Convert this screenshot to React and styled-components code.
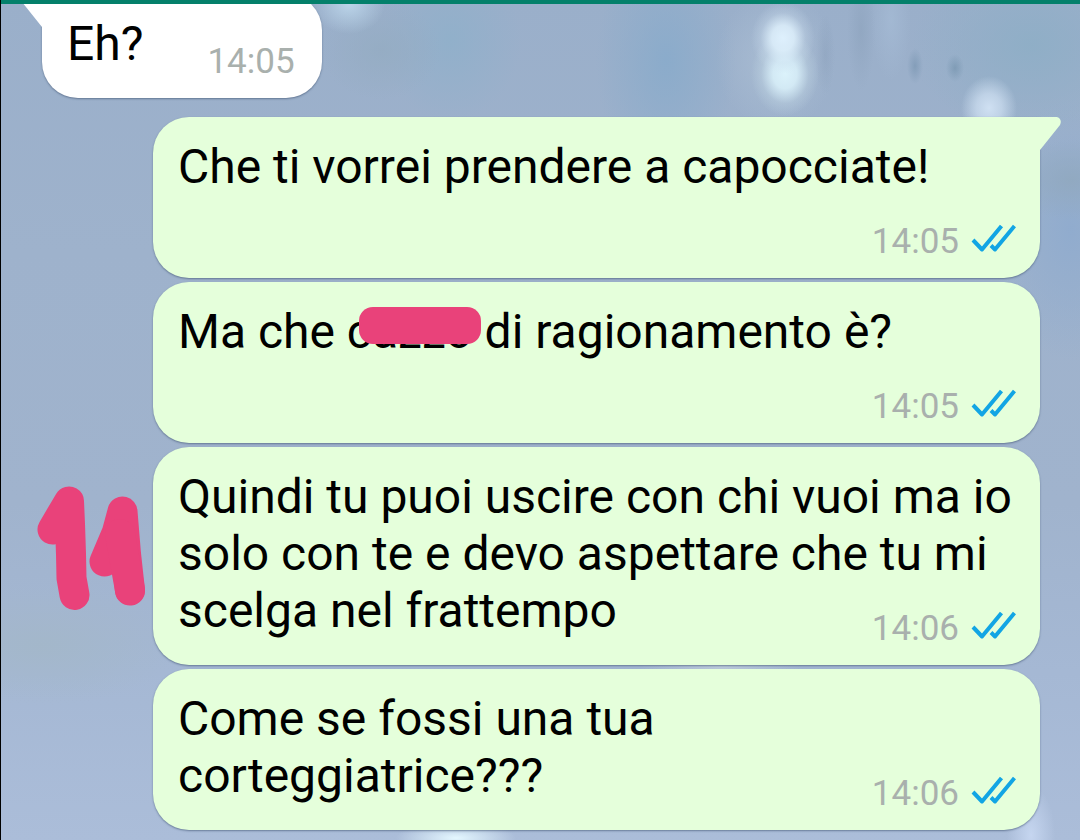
import styled, { createGlobalStyle, css } from "styled-components";

const GlobalStyle = createGlobalStyle`
  * {
    box-sizing: border-box;
  }

  body {
    margin: 0;
    font-family: Roboto, sans-serif;
    color: #000;
  }
`;

const Page = styled.div`
  min-height: 100vh;
  display: flex;
  flex-direction: column;
  border-left: 1px solid #000;
  background: radial-gradient(
      ellipse 32px 36px at 782px 38px,
      #def0fd 0%,
      rgba(222, 240, 252, 0.85) 35%,
      rgba(205, 223, 240, 0.3) 70%,
      transparent 100%
    ),
    radial-gradient(
      ellipse 34px 42px at 784px 74px,
      #dbf2fb 0%,
      rgba(219, 242, 251, 0.85) 35%,
      rgba(200, 222, 234, 0.3) 70%,
      transparent 100%
    ),
    radial-gradient(
      ellipse 60px 70px at 775px 60px,
      rgba(175, 194, 214, 0.7),
      transparent
    ),
    radial-gradient(
      ellipse 28px 32px at 988px 108px,
      #cfe0f2 0%,
      rgba(207, 224, 242, 0.7) 45%,
      transparent 100%
    ),
    radial-gradient(
      ellipse 36px 30px at 348px 4px,
      rgba(190, 216, 236, 0.9),
      transparent
    ),
    radial-gradient(ellipse 60px 16px at 455px 838px, #e4f7ff, transparent),
    radial-gradient(
      ellipse 24px 50px at 1030px 835px,
      rgba(200, 216, 242, 0.9),
      transparent
    ),
    radial-gradient(
      ellipse 80px 14px at 720px 667px,
      rgba(200, 214, 224, 0.7),
      transparent
    ),
    radial-gradient(
      ellipse 8px 18px at 914px 66px,
      rgba(122, 150, 178, 0.7),
      transparent
    ),
    radial-gradient(
      ellipse 9px 14px at 954px 68px,
      rgba(118, 148, 174, 0.7),
      transparent
    ),
    radial-gradient(
      ellipse 10px 40px at 824px 55px,
      rgba(136, 158, 186, 0.6),
      transparent
    ),
    radial-gradient(
      ellipse 14px 60px at 860px 30px,
      rgba(140, 162, 188, 0.6),
      transparent
    ),
    radial-gradient(
      ellipse 20px 60px at 890px 20px,
      rgba(166, 188, 214, 0.7),
      transparent
    ),
    radial-gradient(
      ellipse 60px 50px at 380px 50px,
      rgba(148, 172, 194, 0.8),
      transparent
    ),
    radial-gradient(
      ellipse 70px 80px at 450px 40px,
      rgba(144, 176, 202, 0.9),
      transparent
    ),
    radial-gradient(
      ellipse 70px 120px at 665px 60px,
      rgba(137, 171, 203, 0.9),
      transparent
    ),
    radial-gradient(
      ellipse 120px 90px at 1030px 45px,
      rgba(142, 174, 198, 0.9),
      transparent
    ),
    radial-gradient(
      ellipse 60px 40px at 1070px 180px,
      rgba(144, 168, 190, 0.8),
      transparent
    ),
    radial-gradient(
      ellipse 80px 130px at 1070px 230px,
      rgba(143, 171, 206, 0.9),
      transparent
    ),
    radial-gradient(
      ellipse 140px 60px at 40px 645px,
      rgba(163, 183, 201, 0.9),
      transparent
    ),
    linear-gradient(
      180deg,
      #9aafca 0%,
      #9eb2cc 30%,
      #a0b3cd 60%,
      #a5b8d4 80%,
      #abbdd9 100%
    );
`;

const TopBar = styled.header`
  height: 4px;
  flex: none;
  background: #04806b;
`;

/* the list is scrolled, so its first bubble goes in under the bar */
const MessageList = styled.main`
  flex: 1;
  display: flex;
  flex-direction: column;
  gap: 4px;
  margin-top: -10px;
  padding: 0 40px 10px 41px;
  clip-path: inset(10px 0 0 0);
`;

const outgoing = css`
  margin-left: 111px;
  padding-right: 24px;
  background: #e5ffdb;
  color: #e5ffdb;
`;

const incoming = css`
  align-self: flex-start;
  margin-bottom: 15px;
  padding-right: 27px;
  background: #fff;
  color: #fff;
`;

const Bubble = styled.article`
  position: relative;
  padding: 21px 0 26px 25px;
  border-radius: 36px;
  box-shadow: 0 1px 2px rgba(60, 80, 110, 0.6);
  ${({ $own }) => ($own ? outgoing : incoming)}
  ${({ $own, $tail }) =>
    $tail &&
    ($own ? "border-top-right-radius: 0;" : "border-top-left-radius: 0;")}
`;

const Tail = styled.svg`
  position: absolute;
  top: 0;
  width: 22px;
  height: 34px;
  fill: currentColor;
  ${({ $own }) =>
    $own ? "left: calc(100% - 1px);" : "right: calc(100% - 1px); scale: -1 1;"}
`;

const Text = styled.div`
  display: flow-root;
  font-size: 48px;
  line-height: 57px;
  color: #000;
`;

/* floats to the end of the last line, or below it when there is no room */
const Meta = styled.span`
  float: right;
  display: flex;
  align-items: center;
  gap: 12px;
  margin: 26px 0 -11px 64px;
  font-size: 35px;
  line-height: 42px;
  color: #a9b0ad;
`;

const Ticks = styled.svg`
  width: 45px;
  height: 30px;
  margin-bottom: 6px;
  fill: none;
  stroke: #12a5e4;
  stroke-width: 4;
  stroke-linejoin: round;
`;

const Censored = styled.span`
  position: relative;

  &::after {
    content: "";
    position: absolute;
    top: 4px;
    left: 12px;
    right: -8px;
    height: 37px;
    border-radius: 14px;
    background: #e9427a;
  }
`;

const Scribble = styled.svg`
  position: absolute;
  top: 37px;
  right: calc(100% + 6px);
  width: 111px;
  height: 128px;
  fill: none;
  stroke: #e9427a;
  stroke-width: 30;
  stroke-linecap: round;
  stroke-linejoin: round;
`;

const messages = [
  { id: 1, text: "Eh?", time: "14:05", tail: true },
  {
    id: 2,
    own: true,
    tail: true,
    text: "Che ti vorrei prendere a capocciate!",
    time: "14:05",
  },
  {
    id: 3,
    own: true,
    text: (
      <>
        Ma che <Censored>cazzo</Censored> di ragionamento è?
      </>
    ),
    time: "14:05",
  },
  {
    id: 4,
    own: true,
    marked: true,
    text: "Quindi tu puoi uscire con chi vuoi ma io solo con te e devo aspettare che tu mi scelga nel frattempo",
    time: "14:06",
  },
  {
    id: 5,
    own: true,
    text: "Come se fossi una tua corteggiatrice???",
    time: "14:06",
  },
];

const Message = ({ message }) => {
  const { own, tail, marked, text, time } = message;

  return (
    <Bubble $own={own} $tail={tail}>
      {tail && (
        <Tail $own={own} viewBox="0 0 22 34" aria-hidden="true">
          <path d="M0 0H17C21 0 23 4 21 8L1 33V34H0Z" />
        </Tail>
      )}
      {marked && (
        <Scribble viewBox="0 0 111 128" aria-hidden="true">
          <path d="M16.500 45.500L33 17.500L34 40L35 70L35.500 94L38.500 111" />
          <path d="M68.500 77.500L81 48L86.500 27.500L90 70L94 106.500" />
          <path d="M84 50L94 106" />
        </Scribble>
      )}
      <Text>
        {text}
        <Meta>
          <time>{time}</time>
          {own && (
            <Ticks viewBox="0 0 45 30" aria-hidden="true">
              <path d="M2 16L11 25.500L30.500 2" />
              <path d="M20 21.500L24 25.500L43.500 2" />
            </Ticks>
          )}
        </Meta>
      </Text>
    </Bubble>
  );
};

const App = () => {
  return (
    <>
      <GlobalStyle />
      <Page>
        <TopBar />
        <MessageList>
          {messages.map((message) => (
            <Message key={message.id} message={message} />
          ))}
        </MessageList>
      </Page>
    </>
  );
};

export default App;
